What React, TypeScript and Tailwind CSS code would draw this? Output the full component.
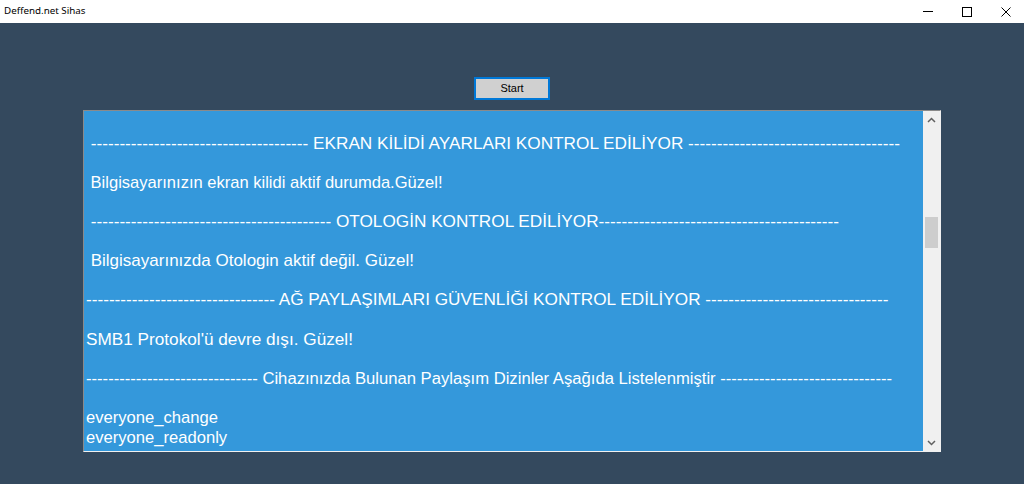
const d = (n: number) => "-".repeat(n);

const lines: { text: string; size: string }[] = [
  { text: "", size: "text-[17.2px]" },
  { text: ` ${d(38)} EKRAN KİLİDİ AYARLARI KONTROL EDİLİYOR ${d(37)}`, size: "text-[17.2px]" },
  { text: "", size: "text-[17.2px]" },
  { text: " Bilgisayarınızın ekran kilidi aktif durumda.Güzel!", size: "text-[16.55px]" },
  { text: "", size: "text-[17.2px]" },
  { text: ` ${d(42)} OTOLOGİN KONTROL EDİLİYOR${d(42)}`, size: "text-[17.2px]" },
  { text: "", size: "text-[17.2px]" },
  { text: " Bilgisayarınızda Otologin aktif değil. Güzel!", size: "text-[17px]" },
  { text: "", size: "text-[17.2px]" },
  { text: `${d(33)} AĞ PAYLAŞIMLARI GÜVENLİĞİ KONTROL EDİLİYOR ${d(32)}`, size: "text-[17.2px]" },
  { text: "", size: "text-[17.2px]" },
  { text: "SMB1 Protokol'ü devre dışı. Güzel!", size: "text-[17.2px]" },
  { text: "", size: "text-[17.2px]" },
  { text: `${d(31)} Cihazınızda Bulunan Paylaşım Dizinler Aşağıda Listelenmiştir ${d(31)}`, size: "text-[16.65px]" },
  { text: "", size: "text-[17.2px]" },
  { text: "everyone_change", size: "text-[16.6px]" },
  { text: "everyone_readonly", size: "text-[16.6px]" },
];

function TitleBar() {
  return (
    <div className="h-[23px] bg-white flex items-center justify-between">
      <div className="pl-[4px] text-[9.8px] text-black font-['Noto_Sans',sans-serif]">
        Deffend.net Sihas
      </div>
      <div className="flex items-center gap-[29px] pr-[13px]">
        <svg width="10" height="10" viewBox="0 0 10 10">
          <line x1="0" y1="4.5" x2="10" y2="4.5" stroke="#000" strokeWidth="1" />
        </svg>
        <svg width="10" height="10" viewBox="0 0 10 10">
          <rect x="0.5" y="0.5" width="9" height="9" fill="none" stroke="#000" strokeWidth="1" />
        </svg>
        <svg width="10" height="10" viewBox="0 0 10 10">
          <path d="M0.5 0.5 L9.5 9.5 M9.5 0.5 L0.5 9.5" stroke="#000" strokeWidth="1" />
        </svg>
      </div>
    </div>
  );
}

function ScrollBar() {
  return (
    <div className="w-[17px] bg-[#f0f0f0] flex flex-col">
      <div className="h-[17px] flex items-center justify-center">
        <svg width="9" height="6" viewBox="0 0 9 6">
          <polyline points="1,5 4.5,1.5 8,5" fill="none" stroke="#606060" strokeWidth="1.5" />
        </svg>
      </div>
      <div className="flex-1 flex flex-col items-center">
        <div className="mt-[89px] w-[13px] h-[31px] bg-[#cdcdcd]" />
      </div>
      <div className="h-[17px] flex items-center justify-center">
        <svg width="9" height="6" viewBox="0 0 9 6">
          <polyline points="1,1 4.5,4.5 8,1" fill="none" stroke="#606060" strokeWidth="1.5" />
        </svg>
      </div>
    </div>
  );
}

export default function App() {
  return (
    <div className="w-[1024px] h-[484px] bg-[#34495e] flex flex-col overflow-hidden">
      <TitleBar />
      <div className="flex flex-col items-center pt-[54px]">
        <button className="w-[76px] h-[23px] bg-[#d0d0d0] border-2 border-[#0078d7] text-[11px] text-black font-['Liberation_Sans',sans-serif] leading-none">
          Start
        </button>
        <div className="mt-[10px] w-[858px] h-[342px] flex border border-t-[#8a8a8a] border-l-[#8a8a8a] border-r-[#f0f0f0] border-b-[#f0f0f0] bg-[#3498db]">
          <div className="flex-1 overflow-hidden pt-[3px] pl-[2px] text-white leading-[19.6px] font-['Liberation_Sans',Arial,sans-serif]">
            {lines.map((line, i) => (
              <div key={i} className={`whitespace-pre h-[19.6px] ${line.size}`}>
                {line.text}
              </div>
            ))}
          </div>
          <ScrollBar />
        </div>
      </div>
    </div>
  );
}
